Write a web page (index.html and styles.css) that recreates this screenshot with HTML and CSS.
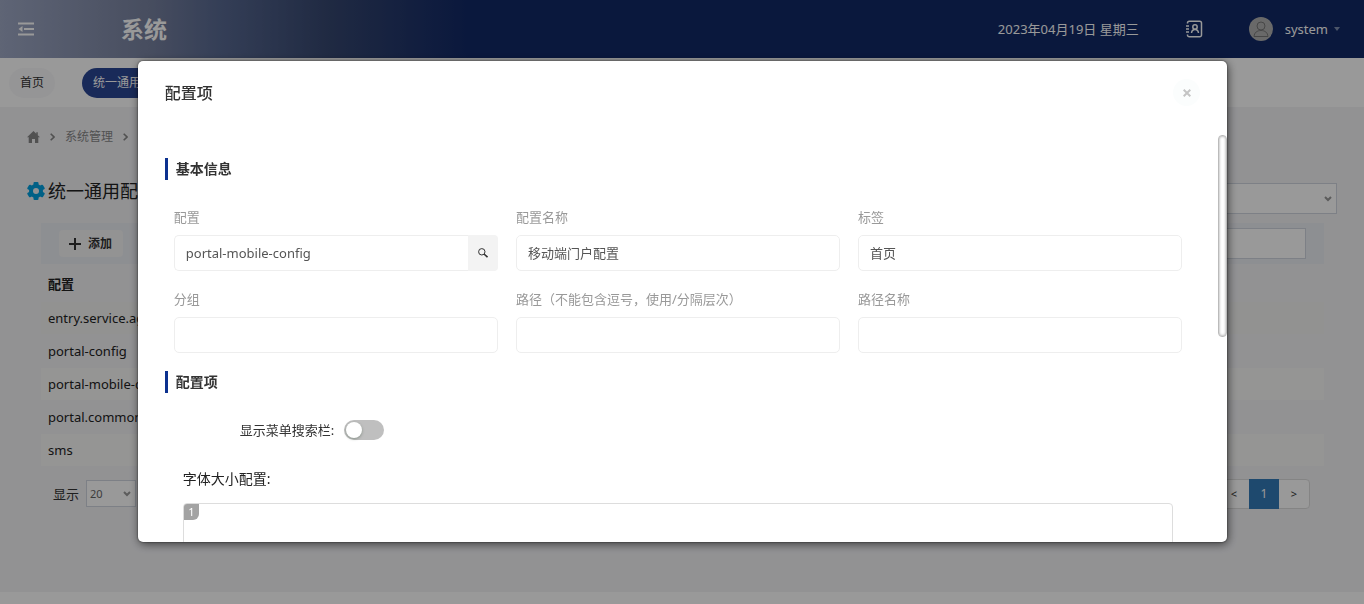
FILE: index.html
```html
<!DOCTYPE html>
<html lang="zh-CN">
<head>
    <meta charset="UTF-8">
    <meta name="viewport" content="width=device-width, initial-scale=1.0">
    <title>统一通用配置</title>
    <link rel="stylesheet" href="styles.css">
</head>
<body>
    <!-- 顶部导航 -->
    <header class="header">
        <button class="menu-btn" type="button" aria-label="收起菜单">
            <svg width="16" height="14" viewBox="0 0 16 14" fill="none" stroke="currentColor" stroke-width="2">
                <path d="M0 1.500h16M6 7h10M0 12.500h16"/>
                <path d="M4.500 4v6L.5 7z" fill="currentColor" stroke="none"/>
            </svg>
        </button>
        <div class="logo">系统</div>
        <div class="header-right">
            <span class="date">2023年04月19日 星期三</span>
            <button class="contacts-btn" type="button" aria-label="通讯录">
                <svg width="18" height="18" viewBox="0 0 18 18" fill="none" stroke="currentColor" stroke-width="1.500">
                    <path d="M2.500 3.500V3A1.800 1.800 0 0 1 4.300 1.200h10.400A1.800 1.800 0 0 1 16.500 3v12a1.800 1.800 0 0 1-1.800 1.800H4.300A1.800 1.800 0 0 1 2.500 15v-.5M1 6h3M1 9h3M1 12h3"/>
                    <circle cx="10" cy="7" r="2.200"/>
                    <path d="M6.500 13c.3-2.200 1.600-3.500 3.500-3.500s3.200 1.300 3.500 3.500"/>
                </svg>
            </button>
            <a class="user" href="#">
                <svg class="avatar" width="24" height="24" viewBox="0 0 24 24" fill="none" stroke="#777">
                    <circle cx="12" cy="12" r="12" fill="#b0b0b0" stroke="none"/>
                    <circle cx="12" cy="9" r="4"/>
                    <path d="M5 19.500c.4-4 3-6 7-6s6.600 2 7 6z"/>
                </svg>
                <span>system</span>
                <span class="caret"></span>
            </a>
        </div>
    </header>

    <!-- 标签页 -->
    <nav class="tabs">
        <a class="tab" href="#">首页</a>
        <a class="tab active" href="#">统一通用配置</a>
    </nav>

    <main class="page">
        <nav class="breadcrumb">
            <a href="#" aria-label="首页">
                <svg width="13" height="12" viewBox="0 0 13 12" fill="currentColor">
                    <path d="M6.500 0 0 6.300h1.700V12H5V8h3v4h3.300V6.300H13L10.800 4.200V1.200H9.300v1.500z"/>
                </svg>
            </a>
            <svg width="5" height="8" viewBox="0 0 5 8" fill="none" stroke="currentColor" stroke-width="1.600"><path d="M.7.7 4 4 .7 7.300"/></svg>
            <a href="#">系统管理</a>
            <svg width="5" height="8" viewBox="0 0 5 8" fill="none" stroke="currentColor" stroke-width="1.600"><path d="M.7.7 4 4 .7 7.300"/></svg>
            <span>统一通用配置</span>
        </nav>

        <div class="title-row">
            <h1 class="page-title">
                <svg width="18" height="18" viewBox="0 0 18 18">
                    <g fill="#00a0e0">
                        <circle cx="9" cy="9" r="7"/>
                        <rect x="6.500" y="0" width="5" height="18" rx="1"/>
                        <rect x="6.500" y="0" width="5" height="18" rx="1" transform="rotate(60 9 9)"/>
                        <rect x="6.500" y="0" width="5" height="18" rx="1" transform="rotate(120 9 9)"/>
                    </g>
                    <circle cx="9" cy="9" r="3" fill="#f3f3f6"/>
                </svg>
                统一通用配置
            </h1>
            <select class="select scope-select" aria-label="范围"><option></option></select>
        </div>

        <section class="list">
            <div class="toolbar">
                <button class="add-btn" type="button">
                    <svg width="12" height="12" viewBox="0 0 12 12" stroke="currentColor" stroke-width="2"><path d="M6 0v12M0 6h12"/></svg>
                    添加
                </button>
                <input class="search" type="text" aria-label="搜索">
            </div>

            <table class="table">
                <thead>
                    <tr><th>配置</th></tr>
                </thead>
                <tbody>
                    <tr><td>entry.service.agent</td></tr>
                    <tr><td>portal-config</td></tr>
                    <tr><td>portal-mobile-config</td></tr>
                    <tr><td>portal.common</td></tr>
                    <tr><td>sms</td></tr>
                </tbody>
            </table>

            <div class="table-footer">
                <label class="page-size">显示
                    <select class="select"><option>20</option></select>
                </label>
                <div class="pagination">
                    <button type="button">&lt;</button>
                    <button type="button" class="current">1</button>
                    <button type="button">&gt;</button>
                </div>
            </div>
        </section>
    </main>

    <!-- 配置项弹窗 -->
    <div class="overlay">
        <div class="modal" role="dialog" aria-labelledby="modalTitle">
            <div class="modal-header">
                <h2 id="modalTitle">配置项</h2>
                <button class="close" type="button" aria-label="关闭">
                    <svg width="8" height="8" viewBox="0 0 8 8" stroke="currentColor" stroke-width="2"><path d="m.7.7 6.600 6.600M7.300.7.7 7.300"/></svg>
                </button>
            </div>

            <form class="modal-body">
                <h3 class="section-title">基本信息</h3>
                <div class="form-grid">
                    <div class="field">
                        <label for="config">配置</label>
                        <div class="input-group">
                            <input id="config" type="text" value="portal-mobile-config">
                            <button type="button" aria-label="查找">
                                <svg width="10" height="10" viewBox="0 0 10 10" fill="none" stroke="currentColor"><circle cx="3.800" cy="3.800" r="3.200"/><path d="m6 6 3.500 3.200" stroke-width="1.600"/></svg>
                            </button>
                        </div>
                    </div>
                    <div class="field">
                        <label for="configName">配置名称</label>
                        <input id="configName" type="text" value="移动端门户配置">
                    </div>
                    <div class="field">
                        <label for="tag">标签</label>
                        <input id="tag" type="text" value="首页">
                    </div>
                    <div class="field">
                        <label for="group">分组</label>
                        <input id="group" type="text">
                    </div>
                    <div class="field">
                        <label for="path">路径<span class="punct">（</span>不能包含逗号<span class="punct">，</span>使用/分隔层次<span class="punct">）</span></label>
                        <input id="path" type="text">
                    </div>
                    <div class="field">
                        <label for="pathName">路径名称</label>
                        <input id="pathName" type="text">
                    </div>
                </div>

                <h3 class="section-title">配置项</h3>
                <div class="switch-row">
                    <label for="showSearch">显示菜单搜索栏:</label>
                    <input class="switch" id="showSearch" type="checkbox">
                </div>
                <div class="editor-field">
                    <label for="fontSize">字体大小配置:</label>
                    <div class="editor">
                        <span class="line-no">1</span>
                        <textarea id="fontSize"></textarea>
                    </div>
                </div>
            </form>
            <div class="scroll-thumb"></div>
        </div>
    </div>
</body>
</html>
```
FILE: styles.css
```css
* {
    box-sizing: border-box;
}

body {
    margin: 0;
    min-height: 100vh;
    display: flex;
    flex-direction: column;
    overflow: hidden;
    background-color: #fff;
    color: #333;
    font-family: "Noto Sans", "Noto Sans CJK SC", sans-serif;
    font-size: 13px;
    line-height: 20px;
}

button, input, select, textarea {
    font: inherit;
    color: inherit;
}

button {
    padding: 0;
    border: none;
    background: none;
    cursor: pointer;
}

a {
    color: inherit;
    text-decoration: none;
}

svg {
    display: block;
    flex: none;
}

/* 顶部导航 */
.header {
    display: flex;
    align-items: center;
    height: 58px;
    padding: 0 24px 1px 18px;
    color: #fff;
    background: linear-gradient(90deg, #9ea8c4 0, #77819f 150px, #586991 220px, #35466f 330px, #112866 470px);
}

.logo {
    margin-left: 87px;
    font-size: 23px;
    font-weight: bold;
    line-height: 32px;
}

.header-right {
    display: flex;
    align-items: center;
    margin-left: auto;
}

.contacts-btn {
    margin: 0 46px;
}

.user {
    display: flex;
    align-items: center;
    gap: 12px;
}

.caret {
    margin-left: -6px;
    border: 3px solid transparent;
    border-top: 4px solid #7f8fb0;
    border-bottom: none;
}

/* 标签页 */
.tabs {
    display: flex;
    gap: 27px;
    padding: 10px 9px 9px;
    background-color: #fff;
    font-size: 12px;
}

.tab {
    padding: 0 11px;
    border-radius: 15px;
    background-color: #f9f9fb;
    line-height: 30px;
}

.tab.active {
    background-color: #2a4694;
    color: #fff;
}

/* 页面内容 */
.page {
    flex: 1;
    margin-bottom: 12px;
    padding: 20px 27px 0;
    background-color: #f3f3f6;
}

.breadcrumb {
    display: flex;
    align-items: center;
    gap: 10px;
    color: #888;
    font-size: 12px;
}

.title-row {
    display: flex;
    justify-content: space-between;
    margin-top: 36px;
}

.page-title {
    display: flex;
    align-items: center;
    gap: 3px;
    height: 15px;
    margin: 0;
    font-size: 18px;
    font-weight: normal;
    color: #222;
}

.select {
    appearance: none;
    border: 1px solid #d0d6e0;
    background: #fff url("data:image/svg+xml,%3Csvg xmlns='http://www.w3.org/2000/svg' width='8' height='6'%3E%3Cpath d='M1 1l3 3 3-3' fill='none' stroke='%23999' stroke-width='2'/%3E%3C/svg%3E") no-repeat right 4px center;
}

.scope-select {
    width: 200px;
    height: 31px;
}

.list {
    margin: 9px 13px 0 14px;
}

.toolbar {
    display: flex;
    align-items: center;
    justify-content: space-between;
    height: 41px;
    padding: 0 18px;
    background-color: #eceef4;
}

.add-btn {
    display: flex;
    align-items: center;
    gap: 7px;
    height: 27px;
    padding: 0 11px 0 10px;
    border-radius: 4px;
    background-color: #f5f5f6;
    font-size: 12px;
    font-weight: bold;
}

.search {
    width: 200px;
    height: 31px;
    border: 1px solid #d0d6e0;
    background-color: #fff;
}

.table {
    width: 100%;
    margin-top: 4px;
    border-collapse: collapse;
    color: #222;
}

.table th,
.table td {
    height: 33px;
    padding: 0 7px;
    border-bottom: 1px solid #f3f3f6;
    text-align: left;
}

.table tbody tr:nth-child(odd) {
    background-color: #f8f8f7;
}

.table tbody tr:first-child {
    background-color: #f3f3f2;
}

.table-footer {
    display: flex;
    justify-content: space-between;
    margin: 12px 14px 0 12px;
}

.page-size {
    display: flex;
    align-items: center;
    gap: 7px;
}

.page-size .select {
    width: 50px;
    height: 27px;
    padding: 0 3px;
    font-size: 11px;
    color: #666;
}

.pagination {
    display: flex;
    height: 30px;
    border: 1px solid #ddd;
    border-radius: 4px;
    background-color: #fff;
}

.pagination button {
    width: 30px;
    font-size: 11px;
}

.pagination .current {
    margin: -1px 0;
    background-color: #337ab7;
    color: #fff;
    font-size: 12px;
}

/* 弹窗 */
.overlay {
    position: fixed;
    inset: 0;
    display: flex;
    align-items: center;
    justify-content: center;
    padding: 0 0 1px 1px;
    z-index: 1000;
    background-color: rgba(0, 0, 0, 0.4);
}

.modal {
    position: relative;
    display: flex;
    flex-direction: column;
    width: calc(80% - 1px);
    height: calc(80% - 1px);
    border-radius: 5px;
    background-color: #fff;
    box-shadow: 0 0 2px rgba(0, 0, 0, 0.7), 1px 2px 10px rgba(0, 0, 0, 0.6);
    overflow: hidden;
}

.modal-header {
    display: flex;
    align-items: center;
    justify-content: space-between;
    height: 64px;
    padding: 0 27px;
    flex: none;
}

.modal-header h2 {
    margin: 0;
    font-size: 16px;
    font-weight: 500;
}

.close {
    display: flex;
    align-items: center;
    justify-content: center;
    width: 27px;
    height: 27px;
    border-radius: 50%;
    background-color: #fbfdfd;
    color: #c4c4c4;
}

.modal-body {
    flex: 1;
    min-height: 0;
    padding: 33px 45px 0 27px;
    overflow: hidden;
}

.section-title {
    margin: 0;
    padding-left: 8px;
    border-left: 3px solid #0c318f;
    font-size: 14px;
    line-height: 22px;
}

.form-grid {
    display: grid;
    grid-template-columns: repeat(3, 1fr);
    gap: 18px;
    margin: 27px 0 18px 9px;
}

.field label {
    display: block;
    height: 20px;
    margin-bottom: 8px;
    color: #999;
}

.punct {
    font-family: "Noto Sans CJK TC", sans-serif;
}

.field input {
    display: block;
    width: 100%;
    height: 36px;
    padding: 0 11px;
    border: 1px solid #eee;
    border-radius: 5px;
    background-color: #fff;
    color: #555;
}

.input-group {
    display: flex;
}

.input-group input {
    flex: 1;
    min-width: 0;
    border-right: none;
    border-radius: 5px 0 0 5px;
}

.input-group button {
    display: flex;
    align-items: center;
    justify-content: center;
    width: 30px;
    border-radius: 0 4px 4px 0;
    background-color: #f3f3f3;
}

.switch-row {
    display: flex;
    align-items: center;
    gap: 10px;
    margin: 27px 0 0 75px;
}

.switch {
    appearance: none;
    display: flex;
    width: 40px;
    height: 20px;
    margin: 0;
    padding: 2px;
    border-radius: 10px;
    background-color: #bfbfbf;
    cursor: pointer;
}

.switch::before {
    content: "";
    width: 16px;
    height: 16px;
    border-radius: 50%;
    background-color: #fff;
    box-shadow: 0 1px 3px rgba(0, 35, 11, 0.3);
}

.switch:checked {
    justify-content: flex-end;
    background-color: #0c318f;
}

.editor-field {
    margin: 29px 9px 0 18px;
    font-size: 14px;
    color: #222;
}

.editor-field label {
    display: block;
    margin-bottom: 14px;
}

.editor {
    position: relative;
}

.editor textarea {
    display: block;
    width: 100%;
    height: 200px;
    padding: 0 20px;
    border: 1px solid #ddd;
    border-radius: 4px;
    resize: none;
}

.line-no {
    position: absolute;
    top: 1px;
    left: 1px;
    width: 15px;
    border-radius: 3px 0 6px 0;
    background-color: #a3a3a3;
    color: #fff;
    font-size: 11px;
    line-height: 16px;
    text-align: center;
}

/* 滚动条 */
.scroll-thumb {
    position: absolute;
    top: 74px;
    right: 0;
    width: 9px;
    height: 42%;
    border: 1px solid #bbb;
    border-radius: 4px;
    background-color: #fff;
    box-shadow: inset 0 0 3px rgba(0, 0, 0, 0.4);
}
```
